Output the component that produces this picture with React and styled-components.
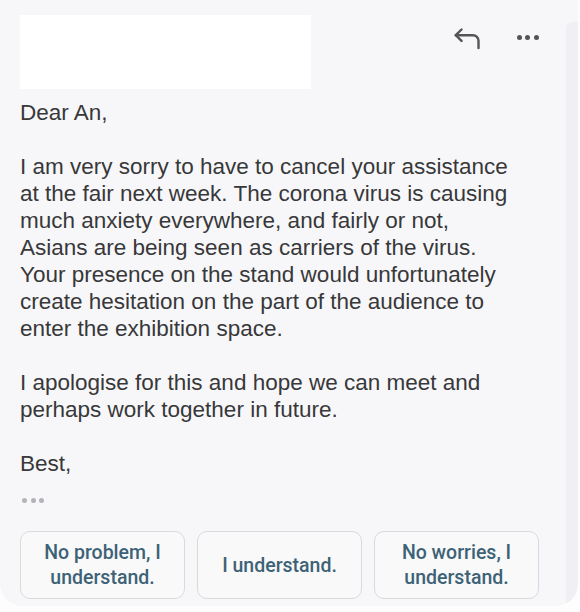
import React from 'react'
import styled, {createGlobalStyle} from 'styled-components'

const GlobalStyle = createGlobalStyle`
    html, body {
        margin: 0;
        padding: 0;
        background: #fdfdfd;
    }
    #root {
        width: 580px;
        height: 612px;
        overflow: hidden;
    }
`

export default function App() {
    const replies = [
        ['No problem, I', 'understand.'],
        ['I understand.'],
        ['No worries, I', 'understand.'],
    ]

    return (
        <>
            <GlobalStyle/>
            <Card>
                <Main>
                    <Header>
                        <Redacted/>
                        <Actions>
                            <IconButton aria-label="reply">
                                <svg width="27" height="22" viewBox="0 0 27 22" fill="none" stroke="#555" strokeWidth="2.4" strokeLinecap="round" strokeLinejoin="round">
                                    <path d="M7.5 1.5 1.8 7.2l5.7 5.7"/>
                                    <path d="M1.8 7.2H19a5.5 5.5 0 0 1 5.5 5.5V20"/>
                                </svg>
                            </IconButton>
                            <Dots size={4} offset={7} color="#555">
                                <span/><span/><span/>
                            </Dots>
                        </Actions>
                    </Header>

                    <Body>
                        <Para>Dear An,</Para>
                        <Para>
                            I am very sorry to have to cancel your assistance at the fair next week. The corona virus is causing much anxiety everywhere, and fairly or not, Asians are being seen as carriers of the virus. Your presence on the stand would unfortunately create hesitation on the part of the audience to enter the exhibition space.
                        </Para>
                        <Para>
                            I apologise for this and hope we can meet and perhaps work together in future.
                        </Para>
                        <Para>Best,</Para>
                    </Body>

                    <Trimmed>
                        <Dots size={4} color="#b4b4b8">
                            <span/><span/><span/>
                        </Dots>
                    </Trimmed>

                    <Replies>
                        {replies.map((lines, i) => (
                            <Reply key={i}>
                                {lines.map((l, j) => <span key={j}>{l}</span>)}
                            </Reply>
                        ))}
                    </Replies>
                </Main>
                <Strip/>
            </Card>
        </>
    )
}

const Card = styled.div`
    display: flex;
    width: 578px;
    height: 606px;
    background: #f7f7f9;
    border-radius: 0 0 22px 22px;
    overflow: hidden;
`
const Main = styled.div`
    flex: 1;
    display: flex;
    flex-direction: column;
    padding: 15px 27px 0 20px;
`
const Strip = styled.div`
    width: 16px;
    margin-top: 22px;
    background: #f0f0f4;
    border-top-left-radius: 6px;
`
const Header = styled.div`
    display: flex;
    align-items: flex-start;
`
const Redacted = styled.div`
    width: 291px;
    height: 74px;
    background: #ffffff;
`
const Actions = styled.div`
    margin-left: auto;
    display: flex;
    align-items: flex-start;
    gap: 36px;
    padding-top: 13px;
`
const IconButton = styled.div`
    display: flex;
    width: 27px;
    height: 22px;
`
const Dots = styled.div`
    display: flex;
    gap: ${p => p.size * 0.9}px;
    margin-top: ${p => p.offset || 0}px;
    span {
        width: ${p => p.size + 1}px;
        height: ${p => p.size + 1}px;
        border-radius: 50%;
        background: ${p => p.color};
    }
`
const Body = styled.div`
    margin-top: 10px;
    max-width: 500px;
    font-family: "Liberation Sans", Arial, sans-serif;
    font-size: 22.5px;
    line-height: 27px;
    color: #38383a;
`
const Para = styled.p`
    margin: 0 0 27px 0;
    &:last-child {
        margin-bottom: 0;
    }
`
const Trimmed = styled.div`
    margin-top: 21px;
    padding-left: 2px;
`
const Replies = styled.div`
    display: grid;
    grid-template-columns: repeat(3, 165px);
    gap: 12px;
    margin-top: 28px;
`
const Reply = styled.div`
    height: 68px;
    box-sizing: border-box;
    border: 1px solid #d9dadd;
    border-radius: 10px;
    background: #f9f9fa;
    display: flex;
    flex-direction: column;
    align-items: center;
    justify-content: center;
    font-family: Roboto, "Noto Sans", sans-serif;
    font-size: 19.5px;
    font-weight: 500;
    line-height: 25px;
    color: #3d6276;
`
